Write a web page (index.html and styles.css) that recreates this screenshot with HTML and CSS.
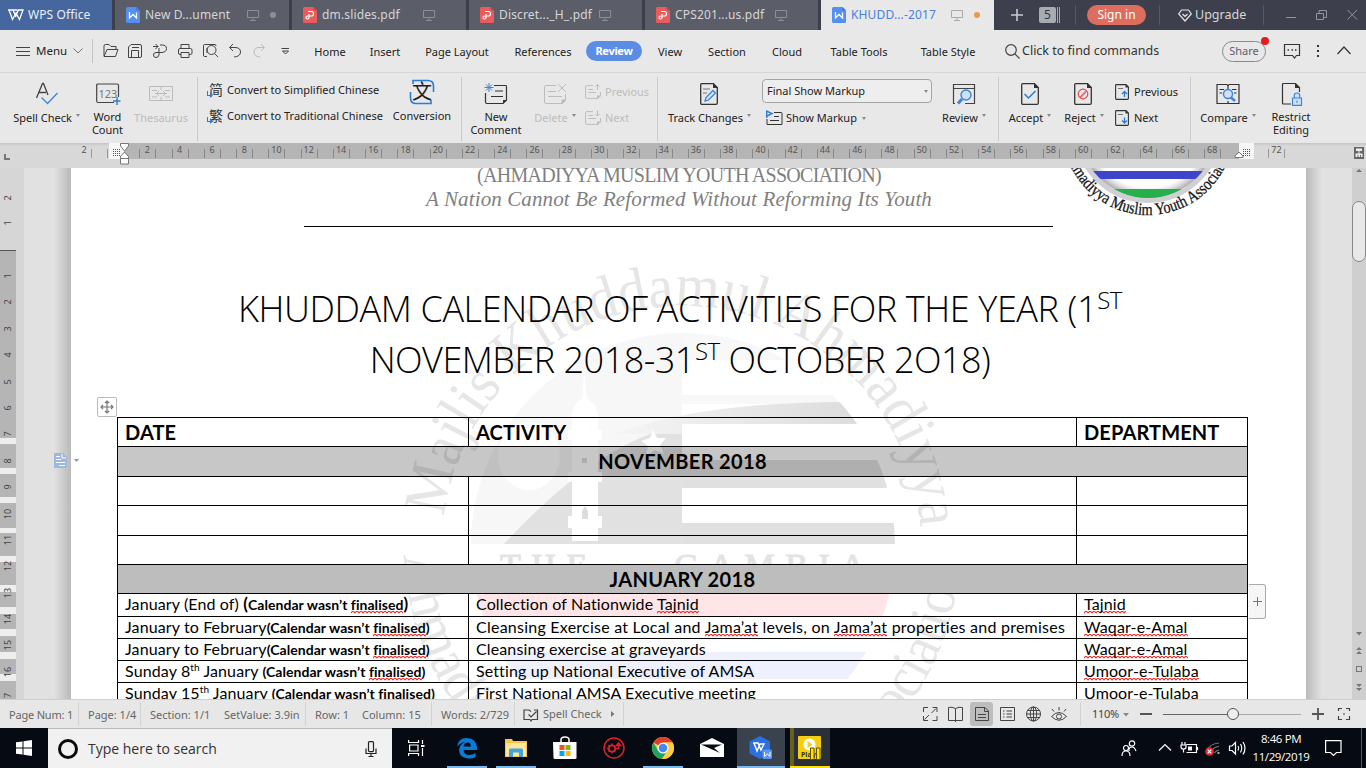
FILE: index.html
```html
<!DOCTYPE html>
<html lang="en">
<head>
<meta charset="utf-8">
<title>KHUDDAM Calendar - WPS Office</title>
<link rel="stylesheet" href="styles.css">
</head>
<body>
<svg class="defs" width="0" height="0">
  <symbol id="doc" viewBox="0 0 14 16"><path d="M1.500 0H10.500L14 3.500V14.500Q14 16 12.500 16H1.500Q0 16 0 14.500V1.500Q0 0 1.500 0Z" fill="#5490f2"/><path d="M10.500 0L14 3.500H10.500Z" fill="#3f74d6"/><path d="M3.500 5V11L7 7.500L10.500 11V5.500" fill="none" stroke="#fff" stroke-width="1.300"/></symbol>
  <symbol id="pdf" viewBox="0 0 14 16"><path d="M1.500 0H10.500L14 3.500V14.500Q14 16 12.500 16H1.500Q0 16 0 14.500V1.500Q0 0 1.500 0Z" fill="#e95c5c"/><path d="M10.500 0L14 3.500H10.500Z" fill="#c74949"/><path d="M5 4.500H8.500Q10.500 4.500 10.500 6.700T8.500 9H4.800Q3 9 3 10.500T4.500 12Q6 12 6 10.500V7" fill="none" stroke="#fff" stroke-width="1.200"/></symbol>
  <symbol id="screen" viewBox="0 0 12 12"><path d="M.500 1.500H11.500V8.500H.500ZM6 8.500V11M3 11.500H9" fill="none" stroke="currentColor"/></symbol>
  <symbol id="page" viewBox="0 0 18 22"><path d="M1.500 .700H13.500L17.300 4.500V20Q17.300 21.300 16 21.300H2Q.700 21.300 .700 20V1.700Q.700 .700 1.500 .700Z" fill="none" stroke="#333" stroke-width="1.300"/><path d="M13 0L18 5H13Z" fill="#333"/></symbol>
  <symbol id="spage" viewBox="0 0 14 16"><path d="M1.500 .600H11L13.400 3V14.500Q13.400 15.400 12.500 15.400H1.500Q.600 15.400 .600 14.500V1.500Q.600 .600 1.500 .600Z" fill="none" stroke="#333" stroke-width="1.100"/><path d="M10.500 0L14 3.500H10.500Z" fill="#333"/></symbol>
  <symbol id="note" viewBox="0 0 16 14"><path d="M8 .600H1.500Q.600 .600 .600 1.500V12.500Q.600 13.400 1.500 13.400H13L15.400 11V7M3.500 4.500H8M3.500 7.500H11" fill="none" stroke="currentColor"/><path d="M12 14V10.500H16Z" fill="currentColor"/></symbol>
</svg>

<header class="tabs">
  <div class="brand"><svg width="16" height="12" viewBox="0 0 16 12"><path d="M0 1H5M1 1L4.500 10.500L8 4L11.500 10.500L15 1H10.500L7.500 7M5 1L8 8M5 1H9.500" fill="none" stroke="#fff" stroke-width="1.300"/></svg><span>WPS Office</span></div>
  <div class="tab"><svg class="file"><use href="#doc"/></svg><span>New D...ument</span><svg class="scr s1"><use href="#screen"/></svg><i class="dot"></i></div>
  <div class="tab"><svg class="file"><use href="#pdf"/></svg><span>dm.slides.pdf</span><svg class="scr s2"><use href="#screen"/></svg></div>
  <div class="tab"><svg class="file"><use href="#pdf"/></svg><span>Discret..._H_.pdf</span><svg class="scr s3"><use href="#screen"/></svg></div>
  <div class="tab"><svg class="file"><use href="#pdf"/></svg><span>CPS201...us.pdf</span><svg class="scr s4"><use href="#screen"/></svg></div>
  <div class="tab active"><svg class="file"><use href="#doc"/></svg><span>KHUDD...-2017</span><svg class="scr s5"><use href="#screen"/></svg><i class="dot"></i></div>
  <div class="plus"><svg width="12" height="12" viewBox="0 0 12 12"><path d="M6 0V12M0 6H12" stroke="#c9cad0" stroke-width="1.600"/></svg></div>
  <div class="count"><b>5</b><i></i><i></i></div>
  <div class="sign"><span>Sign in</span></div>
  <div class="upg"><svg width="14" height="13" viewBox="0 0 14 13"><path d="M3.500 1H10.500L13.300 5L7 12L.700 5ZM4.500 5L7 7.500L9.500 5" fill="none" stroke="#e4e4e8" stroke-width="1.200"/></svg><span>Upgrade</span></div>
  <div class="win"><svg width="76" height="12" viewBox="0 0 76 12"><path d="M0 8.500H10M30.500 4.500H37.500V10.500H30.500ZM33 4V1.500H40.500V8.500H38M61.500 1L71 10.500M71 1L61.500 10.500" fill="none" stroke="#92949d"/></svg></div>
</header>

<nav class="menu">
  <div class="m-burger"><svg width="14" height="11" viewBox="0 0 14 11"><path d="M0 1.500H14M0 5.500H14M0 9.500H14" stroke="#444"/></svg><span>Menu</span><svg width="10" height="6" viewBox="0 0 10 6"><path d="M.500 .500L5 5L9.500 .500" fill="none" stroke="#777"/></svg></div>
  <div class="quick"><svg width="190" height="16" viewBox="0 0 190 16" fill="none" stroke="#444">
    <path d="M1 13V3Q1 1.500 2.500 1.500H6L8 3.500H13V6M1 13.500L4 6.500H15L12.500 13.500Z"/>
    <path d="M25.500 14.500V4L28 1.500H37Q38.500 1.500 38.500 3V13Q38.500 14.500 37 14.500H25.500M28.500 14V7.500H35.500V14M29 4.500H36"/>
    <path d="M50 3.500H55M52.500 1L55 3.500L52.500 6M57 2H59Q63.500 2 63.500 5.500T59 9.500H53Q50.500 9.500 50.500 12T53 14.500T56 12V5"/>
    <path d="M78 5V1.500H86V5M78 11.500H77Q75.500 11.500 75.500 10V7Q75.500 5.500 77 5.500H87.500Q89 5.500 89 7V10Q89 11.500 87.500 11.500H86M78 9.500H86V14.500H78Z"/>
    <path d="M104 13.500H101.500Q100.500 13.500 100.500 12V2.500Q100.500 1.500 101.500 1.500H112Q113 1.500 113 3M111.500 10.500L115 14M104 5V10"/><circle cx="108.500" cy="7" r="4.500"/>
    <path d="M130 1L126.500 4.500L130 8M127 4.500H132Q137.500 4.500 137.500 9T131 14"/>
    <path stroke="#bbb" d="M158 1L161.500 4.500L158 8M161 4.500H156Q151 4.500 151 9T157 14"/>
    <path d="M178.500 5.500H186M179.500 8L182.500 11L185.500 8Z"/></svg></div>
  <span>Home</span><span>Insert</span><span>Page Layout</span><span>References</span><span class="on">Review</span><span>View</span><span>Section</span><span>Cloud</span><span>Table Tools</span><span>Table Style</span>
  <div class="find"><svg width="15" height="15" viewBox="0 0 15 15" fill="none" stroke="#444" stroke-width="1.200"><circle cx="6" cy="6" r="5.300"/><path d="M10 10L14.500 14.500"/></svg><span>Click to find commands</span></div>
  <div class="share">Share<i></i></div>
  <div class="mtools"><svg width="70" height="18" viewBox="0 0 70 18" fill="none" stroke="#333"><path d="M1.500 2.500H16.500V13.500H13.500L11.500 16L9.500 13.500H1.500Z" stroke-width="1.200"/><path d="M4.500 8H6M8.500 8H10M12 8H13.500" stroke-width="1.500"/><path d="M35 3V5M35 8V10M35 13V15" stroke-width="2"/><path d="M54.500 12L61 5L67.500 12" stroke-width="1.200"/></svg></div>
</nav>

<section class="ribbon">
  <div class="grp g1">
    <div class="tool"><svg width="24" height="24" viewBox="0 0 24 24" fill="none"><path d="M1.500 16L7.500 1.500H8.500L13 13M4 10.500H11" stroke="#444" stroke-width="1.300"/><path d="M6.500 15.500L12.500 21.500L22.500 11" stroke="#3c86d8" stroke-width="1.300"/></svg><span class="dd low">Spell Check</span></div>
    <div class="tool"><svg width="24" height="24" viewBox="0 0 24 24" fill="none"><path d="M18 20.500H2Q.700 20.500 .700 19V3Q.700 2 2 2H21Q22.500 2 22.500 3V15" stroke="#444" stroke-width="1.200"/><path d="M21 15V23M17 19H24.500" stroke="#2b7cd3" stroke-width="1.400"/><text x="2.500" y="15.500" class="n123">123</text></svg><span>Word<br>Count</span></div>
    <div class="tool off"><svg width="24" height="24" viewBox="0 0 24 24" fill="none" stroke="#bcbcbc"><path d="M.500 4.500H23.500V18.500H.500ZM12 4.500V8M12 15V18.500M3 8.500H8M16 8.500H21M3 15H8M16 15H21M6 11.500H18M10 9L7.500 11.500L10 14M14 9L16.500 11.500L14 14"/></svg><span class="low">Thesaurus</span></div>
  </div>
  <div class="grp g2">
    <div class="rows"><div><i class="cjk" lang="zh">简</i>Convert to Simplified Chinese</div><div><i class="cjk" lang="zh">繁</i>Convert to Traditional Chinese</div></div>
    <div class="tool"><div class="conv"><svg width="26" height="26" viewBox="0 0 26 26" fill="none" stroke="#2b7cd3" stroke-width="1.600"><path d="M4 5V1.500H19Q24.500 1.500 24.500 7V13M1.500 13V19Q1.500 24.500 7 24.500H22V21M1.500 13V17"/></svg><b lang="zh">文</b></div><span>Conversion</span></div>
  </div>
  <div class="grp g3">
    <div class="tool"><svg width="24" height="24" viewBox="0 0 24 24" fill="none"><path d="M10 3.500H22Q22.500 3.500 22.500 5V18L19 21.500H3Q1.500 21.500 1.500 20V11M11 9H19M7 14.500H19" stroke="#333" stroke-width="1.200"/><path d="M19 22V18H23Z" fill="#333"/><path d="M5 1V10M.500 5.500H9.500M2 2.500L8 8.500M8 2.500L2 8.500" stroke="#3c86d8"/></svg><span>New<br>Comment</span></div>
    <div class="tool off"><svg width="24" height="24" viewBox="0 0 24 24" fill="none" stroke="#bcbcbc"><path d="M13 3.500H2.500Q1.500 3.500 1.500 5V20Q1.500 21.500 3 21.500H19L22.500 18V12M5 9.500H13M5 14.500H19M15 2L23 10M23 2L15 10"/><path d="M19 22V18H23Z" fill="#bcbcbc"/></svg><span class="dd low">Delete</span></div>
    <div class="rows off"><div><svg width="16" height="16" viewBox="0 -1 16 16"><use href="#note" width="16" height="14"/><path d="M12.500 5V-.500M10.500 1.500L12.500 -.500L14.500 1.500" fill="none" stroke="#bcbcbc"/></svg>Previous</div><div><svg width="16" height="16" viewBox="0 -1 16 16"><use href="#note" width="16" height="14"/><path d="M12.500 -.500V5M10.500 3L12.500 5L14.500 3" fill="none" stroke="#bcbcbc"/></svg>Next</div></div>
  </div>
  <div class="grp g4">
    <div class="tool"><svg width="20" height="24" viewBox="0 0 20 24"><use href="#page" x="0" y="1" width="18" height="22"/><path d="M3 7H10M3 11H7" stroke="#777"/><path d="M5 19L6 15.500L13 8.500L15.500 11L8.500 18Z" fill="#cfe0f5" stroke="#3c86d8" stroke-width="1.300"/></svg><span class="dd low">Track Changes</span></div>
    <div class="combo"><div class="box">Final Show Markup</div><div class="show"><svg width="17" height="16" viewBox="0 0 17 16" fill="none"><path d="M8 2.500H15.500Q16 2.500 16 3.500V14.500H1V9M8 6.500H13M4 10.500H13" stroke="#333"/><path d="M.700 8V1L6 3.500L1 6" stroke="#2b7cd3" stroke-width="1.400"/></svg><span class="dd">Show Markup</span></div></div>
    <div class="tool"><svg width="24" height="24" viewBox="0 0 24 24" fill="none"><path d="M3 21.500H1.500V2.500H22.500V21.500H13M1.500 6.500H22.500" stroke="#444" stroke-width="1.200"/><circle cx="14" cy="13" r="5" fill="#cfe0f5" stroke="#3c86d8" stroke-width="1.400"/><path d="M10 17L6 21.500" stroke="#3c86d8" stroke-width="3"/></svg><span class="dd low">Review</span></div>
  </div>
  <div class="grp g5">
    <div class="tool"><svg width="20" height="24" viewBox="0 0 20 24"><use href="#page" x="1" y="1" width="18" height="22"/><path d="M4.500 12L8.500 16L15.500 9" fill="none" stroke="#2b7cd3" stroke-width="1.500"/></svg><span class="dd low">Accept</span></div>
    <div class="tool"><svg width="20" height="24" viewBox="0 0 20 24"><use href="#page" x="0" y="1" width="18" height="22"/><circle cx="9" cy="12" r="4.800" fill="none" stroke="#e05252" stroke-width="1.200"/><path d="M6 15L12 8.500M6.500 16L12.500 9.500" stroke="#e05252"/></svg><span class="dd low">Reject</span></div>
    <div class="rows"><div><svg width="15" height="16" viewBox="0 0 15 16"><use href="#spage" width="14" height="16"/><path d="M3 4.500H8" stroke="#777"/><path d="M9.500 13V7.500M7 10L9.500 7.500L12 10" fill="none" stroke="#2b7cd3" stroke-width="1.300"/></svg>Previous</div><div><svg width="15" height="16" viewBox="0 0 15 16"><use href="#spage" width="14" height="16"/><path d="M3 4.500H8" stroke="#777"/><path d="M9.500 7.500V13M7 10.500L9.500 13L12 10.500" fill="none" stroke="#2b7cd3" stroke-width="1.300"/></svg>Next</div></div>
  </div>
  <div class="grp g6">
    <div class="tool"><svg width="24" height="24" viewBox="0 0 24 24" fill="none"><path d="M11 2.500H1V21.500H23V2.500H13L12 4L11 2.500M12 4V7M12 19V21.500M3.500 7.500H8M16 7.500H20.500M3.500 11H6M18 11H20.500" stroke="#333" stroke-width="1.200"/><circle cx="12" cy="12" r="4.500" fill="#cfe0f5" stroke="#3c86d8" stroke-width="1.400"/><path d="M15 15.500L19 19" stroke="#3c86d8" stroke-width="2.500"/></svg><span class="dd low">Compare</span></div>
    <div class="tool"><svg width="20" height="24" viewBox="0 0 20 24" fill="none"><path d="M10 22H2.500Q1.500 22 1.500 21V2.500Q1.500 1.500 2.500 1.500H14.500L18.500 5.500V10" stroke="#333" stroke-width="1.200"/><path d="M14 1L19 6H14Z" fill="#333"/><path d="M11.500 16H20.500V23.300H11.500ZM13.300 16V13.500Q13.300 11 16 11T18.700 13.500V16" fill="#cfe0f5" stroke="#3c86d8" stroke-width="1.200"/><path d="M16 18.500V21" stroke="#3c86d8"/></svg><span>Restrict<br>Editing</span></div>
  </div>
</section>

<div class="ruler">
  <b class="corner"></b>
  <div class="rl"><span class="n0">2</span><i class="grid"></i></div>
  <div class="scale"><span>2</span><span>4</span><span>6</span><span>8</span><span>10</span><span>12</span><span>14</span><span>16</span><span>18</span><span>20</span><span>22</span><span>24</span><span>26</span><span>28</span><span>30</span><span>32</span><span>34</span><span>36</span><span>38</span><span>40</span><span>42</span><span>44</span><span>46</span><span>48</span><span>50</span><span>52</span><span>54</span><span>56</span><span>58</span><span>60</span><span>62</span><span>64</span><span>66</span><span>68</span></div>
  <div class="rr"><i class="grid"></i><span class="n72">72</span></div>
  <svg class="tabicon" width="10" height="12" viewBox="0 0 10 12"><path d="M0 0H10V12H0Z" fill="#666"/><path d="M2 1.500H8V4H2ZM4.500 4H5.500V6.500H4.500ZM1.500 6.500H8.500V10H7V8H6V10H4.500V8H3.500V10H1.500Z" fill="#eee"/></svg>
  <svg class="indent" width="10" height="23" viewBox="0 0 10 23" fill="#fff" stroke="#777"><path d="M.500 .500H8.500V3L4.500 8L.500 3ZM4.500 9L8.500 13.500V15.500H.500V13.500ZM.500 15.500H8.500V21H.500Z"/></svg>
  <svg class="indent right" width="10" height="8" viewBox="0 0 10 8" fill="#fff" stroke="#777"><path d="M5 1L9 5V6.500H1V5Z"/></svg>
</div>

<main class="work">
  <div class="vruler"><span class="v2">2</span><span class="v1">1</span><div class="vs"><span>1</span><span>2</span><span>3</span><span>4</span><span>5</span><span>6</span><span>7</span><span>8</span><span>9</span><span>10</span><span>11</span><span>12</span><span>13</span><span>14</span><span>15</span><span>16</span><span>17</span></div></div>
  <div class="canvas">
    <article class="paper">
      <svg class="mark" width="600" height="531" viewBox="380 168 600 531">
        <defs><path id="up" d="M443 545A239 239 0 0 1 921 545"/><path id="down" d="M404 545A278 278 0 0 0 960 545"/><clipPath id="disc"><circle cx="683" cy="545" r="212"/></clipPath>
        <linearGradient id="fade" x1="0" x2="1"><stop offset="0" stop-color="#f5f5f5"/><stop offset="1" stop-color="#dcdcdc"/></linearGradient></defs>
        <g clip-path="url(#disc)">
          <path d="M470 330H682V544H470Z" fill="#f7f7f7"/><path d="M682 330H895V360H682Z" fill="#f8f8f8"/>
          <path d="M682 395H838V404H682Z" fill="#f8f8f8"/>
          <ellipse cx="529" cy="456" rx="31" ry="34" fill="#fff"/>
          <path d="M504 544Q600 440 682 425V544Z" fill="#e1e1e1"/>
          <path d="M615 434Q700 402 846 402L858 424H682V434Z" fill="url(#fade)"/>
          <path d="M682 460H895V488H682ZM682 523H895V544H682Z" fill="#e0e0e0"/>
          <path d="M470 594H895V616H470Z" fill="#ffe5e7"/><path d="M470 652H895V679H470Z" fill="#eef0fe"/>
        </g>
        <g fill="#fff"><path d="M584 372L587 398Q598 405 598 417V430H602V440H598V472H602V482H598V516H602V528H598V541H572V528H568V516H572V482H568V472H572V440H568V430H572V417Q572 404 582 398Z"/><path d="M626 432A25 25 0 1 0 668 462A22 22 0 0 1 626 432Z"/><path d="M653 430L657 438L666 438L660 445L664 454L655 450L646 456L648 446L641 441L650 438Z"/></g>
        <path d="M582 511L585 506L588 511V519H582ZM582 458H587V463H582Z" fill="#ddd"/>
        <g class="ring"><text font-size="61" textLength="705" lengthAdjust="spacingAndGlyphs"><textPath href="#up" startOffset="28">Majlis Khuddamul Ahmadiyya</textPath></text>
        <text font-size="58" textLength="845" lengthAdjust="spacingAndGlyphs"><textPath href="#down" startOffset="10">Ahmadiyya Muslim Youth Association</textPath></text></g>
        <text class="gambia" x="500" y="577" textLength="365">THE&#160;&#160;&#160; GAMBIA</text>
      </svg>
      <svg class="logo" width="170" height="52" viewBox="1063 168 170 52">
        <defs><path id="lp" d="M1062 129A86 86 0 0 0 1234 129"/><clipPath id="lc"><circle cx="1148" cy="129" r="69"/></clipPath><radialGradient id="lg" gradientUnits="userSpaceOnUse" cx="1148" cy="129" r="69"><stop offset=".850" stop-color="#888" stop-opacity="0"/><stop offset="1" stop-color="#555" stop-opacity=".500"/></radialGradient></defs>
        <circle cx="1148" cy="129" r="71.500" fill="#fff" stroke="#cfcfd4" stroke-width="5"/>
        <circle cx="1148" cy="129" r="69" fill="url(#lg)"/>
        <g clip-path="url(#lc)"><path d="M1070 171H1230V179H1070Z" fill="#3f45cb"/><path d="M1070 189H1230V200H1070Z" fill="#25b04b"/></g>
        <text class="lt" textLength="222" lengthAdjust="spacingAndGlyphs"><textPath href="#lp" startOffset="25">Ahmadiyya Muslim Youth Association</textPath></text>
      </svg>
      <div class="lh"><p class="org">(AHMADIYYA MUSLIM YOUTH ASSOCIATION)</p><p class="motto">A Nation Cannot Be Reformed Without Reforming Its Youth</p><hr></div>
      <h1><span class="t1">KHUDDAM CALENDAR OF ACTIVITIES FOR THE YEAR (1<sup>ST</sup></span><span class="t2">NOVEMBER 2018-31<sup>ST</sup> OCTOBER 2O18)</span></h1>
      <div class="table">
        <div class="h">DATE</div><div class="h">ACTIVITY</div><div class="h">DEPARTMENT</div>
        <div class="h full nov">NOVEMBER 2018</div>
        <div></div><div></div><div></div><div></div><div></div><div></div><div></div><div></div><div></div>
        <div class="h full jan">JANUARY 2018</div>
        <div>January (End of) <b class="big">(</b><b>Calendar wasn’t <u>finalised</u></b><b class="big">)</b></div><div>Collection of Nationwide <u>Tajnid</u></div><div><u>Tajnid</u></div>
        <div>January to February<b>(Calendar wasn’t <u>finalised</u>)</b></div><div class="long">Cleansing Exercise at Local and <u>Jama’at</u> levels, on <u>Jama’at</u> properties and premises</div><div><u>Waqar-e-Amal</u></div>
        <div>January to February<b>(Calendar wasn’t <u>finalised</u>)</b></div><div>Cleansing exercise at graveyards</div><div><u>Waqar-e-Amal</u></div>
        <div>Sunday 8<sup>th</sup> January <b>(Calendar wasn’t <u>finalised</u>)</b></div><div>Setting up National Executive of AMSA</div><div><u>Umoor-e-Tulaba</u></div>
        <div>Sunday 15<sup>th</sup> January <b>(Calendar wasn’t <u>finalised</u>)</b></div><div>First National AMSA Executive meeting</div><div><u>Umoor-e-Tulaba</u></div>
      </div>
      <div class="move"><svg width="14" height="14" viewBox="0 0 14 14" fill="none" stroke="#777" stroke-width="1.200"><path d="M7 1V13M1 7H13M5 3L7 1L9 3M5 11L7 13L9 11M3 5L1 7L3 9M11 5L13 7L11 9"/></svg></div>
      <div class="addcol"><svg width="9" height="9" viewBox="0 0 9 9"><path d="M4.500 0V9M0 4.500H9" stroke="#777"/></svg></div>
    </article>
    <svg class="sect" width="26" height="16" viewBox="0 0 26 16"><path d="M0 0H9L13 4V15H0Z" fill="#9db7dd"/><path d="M2 3.500H6M2 6.500H7M2 9.500H11M5 12.500H11M8 1V5H12" stroke="#fff" fill="none"/><path d="M20 6H25L22.500 9Z" fill="#999"/></svg>
  </div>
  <aside class="scroll"><svg width="14" height="531" viewBox="0 0 14 531"><path d="M4 4L7 1L10 4Z" fill="#777"/><rect x=".500" y="33.500" width="13" height="60" rx="6.500" fill="#e8e8e8" stroke="#888"/><path d="M4 464H10L7 467.500ZM4 482L7 479L10 482ZM4 486L7 483L10 486ZM4 516H10L7 519ZM4 520H10L7 523Z" fill="#777"/><rect x="4.500" y="498.500" width="5" height="5" fill="none" stroke="#777"/></svg></aside>
</main>

<footer class="status">
  <span>Page Num: 1</span><span class="bl">Page: 1/4</span><span class="bl">Section: 1/1</span><span>SetValue: 3.9in</span><span class="bl">Row: 1</span><span>Column: 15</span><span class="bl">Words: 2/729</span>
  <span class="bl sp"><svg width="16" height="13" viewBox="0 0 16 13" fill="none" stroke="#444" stroke-width="1.200"><path d="M11 1H14.500V10.500H9L8 12L7 10.500H1V1H6L8 2.500M5.500 5.500L8 8L13.500 2.500"/></svg>Spell Check<svg class="ar" width="4" height="6" viewBox="0 0 4 6"><path d="M0 0L3.500 3L0 6Z" fill="#777"/></svg></span>
  <div class="views"><svg width="150" height="24" viewBox="920 0 150 24" fill="none" stroke="#444"><rect x="970" y="0" width="23" height="24" rx="3" fill="#bdbdbd" stroke="none"/><path d="M923.500 10V5.500H928M932.500 5.500H937V10M937 14V18.500H932.500M928 18.500H923.500V14M936 6.500L931.500 11M924.500 17.500L929 13"/><path d="M955.500 6.500Q952 4.500 948.500 5.500V18.500H962.500V5.500Q959 4.500 955.500 6.500V20"/><path d="M975.500 5.500H985L988.500 9V18.500H975.500ZM984.500 5.500V9.500H988.500M978 12.500H986M978 15.500H986"/><path d="M1000.500 5.500H1014.500V18.500H1000.500ZM1003 9H1004.500M1006.500 9H1012M1003 12H1004.500M1006.500 12H1012M1003 15H1004.500M1006.500 15H1012"/><circle cx="1033.500" cy="12" r="7"/><ellipse cx="1033.500" cy="12" rx="3.200" ry="7"/><path d="M1033.500 5V19M1026.500 12H1040.500M1027.500 8.500H1039.500M1027.500 15.500H1039.500"/><path d="M1051.500 14.500Q1059 6.500 1066.500 14.500Q1059 22 1051.500 14.500M1059 8.500V5M1054 9.500L1052 7M1064 9.500L1066 7"/><circle cx="1059" cy="14.500" r="2.500"/></svg></div>
  <div class="zoom">110%</div>
  <svg class="slider" width="234" height="16" viewBox="1120 0 234 16"><path d="M1123 7H1129L1126 10.500Z" fill="#888"/><path d="M1140 8H1152M1312 8H1324M1318 2V14" stroke="#555" stroke-width="1.800"/><path d="M1163 8.500H1233" stroke="#666"/><path d="M1238 8.500H1301" stroke="#aaa"/><circle cx="1233" cy="8" r="5.500" fill="#efefef" stroke="#555"/><path d="M1338.500 5V2.500H1342M1346 2.500H1349.500V5M1349.500 10V13.500H1346M1342 13.500H1338.500V10M1343 8H1345" fill="none" stroke="#444" stroke-width="1.200"/></svg>
</footer>

<footer class="task">
  <div class="start"><svg width="16" height="16" viewBox="0 0 16 16" fill="#fff"><path d="M0 2.300L6.500 1.400V7.500H0ZM7.500 1.200L16 0V7.500H7.500ZM0 8.500H6.500V14.600L0 13.700ZM7.500 8.500H16V16L7.500 14.800Z"/></svg></div>
  <div class="search"><i></i><span>Type here to search</span><svg width="12" height="16" viewBox="0 0 12 16" fill="none" stroke="#222" stroke-width="1.200"><rect x="3.500" y=".600" width="5" height="10" rx="1"/><path d="M1 7.500V12.500H11V7.500M6 12.500V15.500M3.500 15.500H8.500"/></svg></div>
  <div class="tv"><svg width="17" height="16" viewBox="0 0 17 16" fill="none" stroke="#fff" stroke-width="1.200"><path d="M.600 0V2.500H10.500V0M.600 16V13.500H10.500V16M1.600 5H10V11H1.600ZM14.500 0V4M14.500 8V16"/><path d="M13 6H16.500" stroke-width="2"/></svg></div>
  <div class="run"><svg width="20" height="22" viewBox="0 0 20 22"><path d="M0 10Q1 1 10 1Q19 1 20 11V13H6.500Q7 18 12 18Q16 18 18.500 16V20Q15 22 11 21.500Q2 20.500 2 13Q2.500 7.500 8 5Q3 5.500 0 10ZM6.500 9.500H14Q13.500 5 10.500 5.500Q7 6 6.500 9.500Z" fill="#0a7bd8" fill-rule="evenodd"/></svg></div>
  <div class="run two"><svg width="22" height="20" viewBox="0 0 22 20"><path d="M0 1H7L8 3H22V19H0Z" fill="#f7c64e"/><path d="M1 5H21V18H1Z" fill="#fde59a"/><path d="M4 19V12Q4 10.500 5.500 10.500H16.500Q18 10.500 18 12V19H14V14.500H8V19Z" fill="#3ea6de"/></svg></div>
  <div><svg width="24" height="24" viewBox="0 0 24 24"><path d="M8 7V4Q8 1 12 1T16 4V7" fill="none" stroke="#fff" stroke-width="1.500"/><path d="M0 6H23.500V22Q23.500 23 22 23H2Q.500 23 .500 22Z" fill="#fff"/><path d="M6.500 9H11.500V14H6.500Z" fill="#f25022"/><path d="M12.500 9H17.500V14H12.500Z" fill="#7fba00"/><path d="M6.500 15H11.500V20H6.500Z" fill="#00a4ef"/><path d="M12.500 15H17.500V20H12.500Z" fill="#ffb900"/></svg></div>
  <div><svg width="22" height="22" viewBox="0 0 22 22" fill="none" stroke="#d92228"><circle cx="11" cy="11" r="10" stroke-width="1.500"/><circle cx="9" cy="11.500" r="3.200" stroke-width="1.800"/><path d="M9 6.500V8M9 15V16.500M4 11.500H5.500M5.500 8L6.500 9M5.500 15L6.500 14M12.500 14.500L11.500 14M12 11.500H15.500V9M13.500 8.500L15.500 6L17.500 8.500Z" stroke-width="1.500"/></svg></div>
  <div class="run"><svg width="22" height="22" viewBox="0 0 22 22"><circle cx="11" cy="11" r="11" fill="#ffcd40"/><path d="M11 11L1.500 5.500A11 11 0 0 1 20.500 5.500H11Z" fill="#e33b2e"/><path d="M1.500 5.500A11 11 0 0 0 10 22L15.500 13.500L6 13.500Z" fill="#1da462"/><path d="M11 5.500H20.500A11 11 0 0 1 10 22L15.500 13.500Z" fill="#ffcd40"/><circle cx="11" cy="11" r="5.500" fill="#fff"/><circle cx="11" cy="11" r="4.300" fill="#4587f3"/></svg></div>
  <div><svg width="24" height="20" viewBox="0 0 24 20"><path d="M0 6L12 0L24 6V19H0Z" fill="#fff"/><path d="M1 6.500H22L14 10L20 15Z" fill="#060b13"/></svg></div>
  <div class="run hot"><svg width="24" height="24" viewBox="0 0 24 24"><path d="M11 0L21 5.500V17.500L11 23L.500 17.500V5.500Z" fill="#2b6fe0"/><path d="M4 7H9L12 14L15 8H11L8 15L5 7" fill="none" stroke="#fff" stroke-width="1.400"/><rect x="13.500" y="13.500" width="9.500" height="9.500" rx="1.500" fill="#5a96f8"/><path d="M15.500 16V20.500L18.300 18L21 20.500V16" fill="none" stroke="#fff"/></svg></div>
  <div class="py"><svg width="24" height="24" viewBox="0 0 24 24"><rect width="23" height="23" rx="1" fill="#f4cf10"/><circle cx="11.500" cy="8.500" r="6" fill="#fff"/><path d="M9.500 5L14.500 8.500L9.500 12Z" fill="#f4cf10"/><text x="3" y="21" class="pl">Play</text><path d="M12.500 12H16V23.500H12.500ZM18.500 12H22V23.500H18.500Z" fill="#ffe600" stroke="#5d5200"/></svg></div>
  <div class="tray"><svg width="132" height="18" viewBox="1118 0 132 18" fill="none" stroke="#fff" stroke-width="1.200"><circle cx="1132" cy="4.500" r="2.700"/><path d="M1129 12V10Q1129.500 8 1132 8T1136 12"/><circle cx="1126" cy="9" r="2.500"/><path d="M1122 17Q1122 12 1126 12T1130 17"/><path d="M1159 11.500L1165 5.500L1171 11.500M1186.500 5.500H1196.500V13.500H1186.500M1197.500 8V11M1182 3V6M1185 3V6M1181 6H1186V8Q1186 10 1183.500 10T1181 8ZM1183.500 10V13.500"/><path d="M1188 7.500H1192V11.500H1188Z" fill="#fff" stroke="none"/><path d="M1207 12Q1209 5 1219 4M1211 13Q1213 8 1219 7.500M1214.500 14Q1216 11.500 1219 11" stroke="#777"/><path d="M1217.500 14H1219.500" stroke="#aaa" stroke-width="2"/><circle cx="1209.500" cy="12.500" r="4.300" fill="#e02b2b" stroke="none"/><path d="M1207.700 10.700L1211.300 14.300M1211.300 10.700L1207.700 14.300"/><path d="M1229.500 7V11.500H1232L1235.500 15V3.500L1232 7ZM1238 7Q1239.500 9 1238 11.500M1240.500 5Q1243 9 1240.500 13.500M1243 3Q1247 9 1243 15.500"/></svg></div>
  <div class="clock">8:46 PM<br>11/29/2019</div>
  <div class="notif"><svg width="17" height="17" viewBox="0 0 17 17" fill="none" stroke="#fff" stroke-width="1.200"><path d="M.600 .600H16V12.500H11.500L8.500 15.500L5.500 12.500H.600Z"/></svg></div>
  <div class="peek"></div>
</footer>
</body>
</html>
```

FILE: styles.css
```css
* { box-sizing: border-box; }
body { margin: 0; width: 1366px; height: 768px; overflow: hidden; background: #e8e8e8; font: 11px/14px "Noto Sans", "Open Sans", sans-serif; color: #222; display: flex; flex-direction: column; }
svg { display: block; flex: none; overflow: visible; }
.defs { position: absolute; }
p, h1 { margin: 0; font-weight: normal; }
span, .rows div { white-space: nowrap; }

/* window tabs */
.tabs { height: 30px; flex: none; background: #3d404c; display: grid; grid-template-columns: 112px 177px 177px 176px 176px 176px 45px 36px 84px 104px 103px; font-size: 12px; color: #d5d6da; }
.tabs > div { display: flex; align-items: center; }
.tabs > .brand { background: #46679e; padding-left: 8px; gap: 4px; color: #e9eef7; letter-spacing: .100px; }
.tabs > .tab { background: #5b5d68; margin-left: 3px; padding-left: 11px; letter-spacing: .150px; }
.tabs > .tab.active { background: #e8e8e8; color: #4a80e0; }
.file { width: 14px; height: 16px; margin-right: 5px; }
.tab span { width: 94px; }
.scr { width: 12px; height: 12px; color: #8b8d97; margin-left: 8px; }
.s2 { margin-left: 7px; } .s3 { margin-left: 6px; } .s4 { margin-left: 6px; } .s5 { margin-left: 6px; color: #aaa; }
.dot { width: 6px; height: 6px; border-radius: 50%; background: #8d8f98; margin-left: 11px; }
.active .dot { background: #e89b4c; }
.tabs > .plus { padding-left: 17px; }
.count b { background: #a9abb3; color: #33353f; font-weight: normal; font-size: 12px; width: 17px; height: 16px; line-height: 16px; text-align: center; border-radius: 2px; }
.count i { width: 1px; height: 16px; background: #a9abb3; margin-left: 1px; }
.tabs > .sign, .tabs > .upg, .tabs > .win { background: linear-gradient(#565964, #565964) 0 50%/1px 20px no-repeat; }
.tabs > .sign { padding-left: 12px; }
.sign span { background: #dc6d5f; color: #fff; border-radius: 10px; width: 59px; height: 20px; line-height: 19px; text-align: center; }
.tabs > .upg { padding-left: 19px; gap: 3px; font-size: 12.500px; }
.tabs > .win { padding-left: 23px; }

/* menu */
.menu { height: 43px; flex: none; border-bottom: 1px solid #d6d6d6; display: grid; grid-template-columns: 93px 202px 70px 40px 104px 68px 74px 38px 76px 44px 100px 78px 235px 61px 83px; align-items: center; }
.menu > span { justify-self: center; padding-top: 1px; text-align: center; }
.m-burger { display: flex; align-items: center; padding-left: 16px; gap: 6px; font-size: 11.500px; height: 24px; border-right: 1px solid #c4c4c4; }
.m-burger span { width: 31px; }
.quick { padding-left: 10px; }
.menu .on { background: #5b8de4; color: #fff; font-weight: bold; height: 20px; line-height: 18px; border-radius: 10px; width: 56px; letter-spacing: -.300px; }
.find { display: flex; align-items: center; gap: 2px; padding-left: 18px; font-size: 12.500px; color: #333; }
.share { position: relative; width: 44px; height: 21px; border: 1px solid #8a8a94; border-radius: 11px; text-align: center; line-height: 18px; color: #5b6070; font-size: 11px; }
.share i { position: absolute; right: -4px; top: -5px; width: 8px; height: 8px; border-radius: 50%; background: #e31b1b; }

/* ribbon */
.ribbon { height: 70px; flex: none; display: flex; padding-top: 4px; }
.grp { display: grid; height: 64px; border-right: 1px solid #cacaca; }
.g1 { width: 198px; grid-template-columns: 77px 45px 62px; padding-left: 8px; }
.g2 { width: 264px; grid-template-columns: 181px 68px; padding-left: 9px; }
.g3 { width: 196px; grid-template-columns: 60px 58px 68px; padding-left: 4px; }
.g4 { width: 341px; grid-template-columns: 91px 7px 170px 6px 52px; padding-left: 6px; }
.g4 .combo { grid-column: 3; } .g4 .tool:last-child { grid-column: 5; }
.g5 { width: 192px; grid-template-columns: 54px 57px 70px; padding-left: 4px; }
.g5 .tool:nth-child(2) { padding-right: 3px; }
.g6 { width: 175px; grid-template-columns: 62px 6px 52px; padding-left: 6px; border: 0; }
.g6 .tool:last-child { grid-column: 3; }
.tool { display: flex; flex-direction: column; align-items: center; text-align: center; line-height: 13px; padding-top: 5px; }
.tool > span { margin-top: 4px; }
.tool > .low { margin-top: 5px; }
.dd::after { content: ""; display: inline-block; border: 2.500px solid transparent; border-top: 3px solid #888; border-bottom: 0; margin-left: 4px; vertical-align: 5px; }
.show .dd::after { vertical-align: 2px; margin-left: 5px; }
.off { color: #bcbcbc; }
.rows { display: flex; flex-direction: column; padding-top: 7px; gap: 10px; }
.g2 .rows { padding-top: 5px; }
.rows > div { display: flex; align-items: center; gap: 4px; height: 16px; }
.g3 .rows { padding-left: 1px; }
.g5 .rows { padding-left: 1px; }
.cjk { font: 14px/14px "Noto Sans CJK SC", sans-serif; width: 16px; height: 16px; padding-left: 2px; color: #333; position: relative; }
.cjk::before { content: ""; position: absolute; left: 0; top: 9px; width: 4px; height: 4px; border: solid #2b7cd3; border-width: 0 0 1px 1px; }
.cjk::after { content: ""; position: absolute; left: 3px; top: 10px; border: 3px solid transparent; border-left: 3px solid #2b7cd3; border-right: 0; }
.conv { width: 26px; height: 26px; margin-top: -3px; position: relative; }
.conv + span { margin-top: 4px; }
.conv b { position: absolute; left: 3px; top: 1px; font: 400 20px/22px "Noto Sans CJK SC", sans-serif; }
.n123 { font: 11px "Noto Sans", sans-serif; fill: #777; }
.combo { padding-top: 2px; }
.box { height: 24px; border: 1px solid #a5a5a5; border-radius: 4px; background: #eee; line-height: 22px; padding: 0 3px 0 4px; display: flex; justify-content: space-between; align-items: center; }
.box::after { content: ""; border: 2.500px solid transparent; border-top: 3px solid #888; border-bottom: 0; }
.show { display: flex; align-items: center; gap: 3px; padding: 7px 0 0 4px; }

/* horizontal ruler */
.ruler { height: 25px; flex: none; background: linear-gradient(#c4c4c4, #d8d8d8 3px); display: flex; position: relative; font-size: 9px; color: #555; line-height: 14px; }
.corner { width: 6px; height: 6px; border: solid #777; border-width: 0 0 2px 2px; margin: 11px 0 0 4px; }
.rl { width: 114px; display: flex; justify-content: flex-end; height: 16px; background: linear-gradient(#999, #999) 81px 6px/1px 9px no-repeat, linear-gradient(#999, #999) 97px 6px/1px 9px no-repeat; }
.rl .n0 { width: 16px; text-align: center; margin-right: 17px; }
.grid { width: 15px; height: 16px; background: #f6f6f6; padding: 6px 4px 3px; }
.grid::before { content: ""; display: block; width: 7px; height: 7px; background: repeating-linear-gradient(90deg, transparent 0 1px, #f6f6f6 1px 2px), repeating-linear-gradient(#555 0 1px, #f6f6f6 1px 2px); }
.scale { width: 1115px; height: 16px; background: #b5b5b5; display: flex; padding-left: 7.300px; }
.scale span { width: 32.280px; flex: none; text-align: center; background: linear-gradient(#888, #888) 8px 6px/1px 9px no-repeat, linear-gradient(#888, #888) 24px 6px/1px 9px no-repeat; }
.rr { width: 117px; height: 16px; display: flex; }
.n72 { width: 17px; margin-left: 14px; text-align: center; background: linear-gradient(#999, #999) 0 6px/1px 9px no-repeat, linear-gradient(#999, #999) 16px 6px/1px 9px no-repeat; }
.tabicon { margin-top: 4px; margin-left: -2px; }
.indent { position: absolute; left: 120px; top: 0; }
.indent.right { left: 1234px; top: 8px; }

/* work area */
.work { height: 531px; flex: none; display: flex; }
.vruler { width: 24px; background: #d6d6d6; font-size: 9px; color: #444; overflow: hidden; }
.vruler span { display: block; width: 16px; text-align: center; transform: rotate(-90deg); line-height: 16px; height: 16px; }
.vruler .v2 { margin-top: 22px; } .vruler .v1 { margin-top: 9px; }
.vs { width: 16px; margin-top: 19px; height: 449px; border-top: 1px solid #555; padding-top: 17px; background: linear-gradient(#eee, #eee) 0 187px/16px 6px no-repeat, linear-gradient(#eee, #eee) 0 217px/16px 6px no-repeat, linear-gradient(#eee, #eee) 0 246px/16px 6px no-repeat, linear-gradient(#eee, #eee) 0 277px/16px 5px no-repeat, linear-gradient(#eee, #eee) 0 305px/16px 6px no-repeat, linear-gradient(#eee, #eee) 0 334px/16px 7px no-repeat, linear-gradient(#eee, #eee) 0 356px/16px 7px no-repeat, linear-gradient(#eee, #eee) 0 378px/16px 7px no-repeat, linear-gradient(#eee, #eee) 0 401px/16px 7px no-repeat, linear-gradient(#eee, #eee) 0 423px/16px 7px no-repeat, #b5b5b5; }
.vs span { margin-bottom: 10.400px; }
.canvas { width: 1328px; position: relative; display: flex; padding-left: 47px; background: linear-gradient(90deg, #e1e1e1 30px, #b9b9b9 47px, #b9b9b9 1281px, #e1e1e1 1298px); overflow: hidden; }
.paper { width: 1235px; height: 531px; background: #fff; position: relative; overflow: hidden; isolation: isolate; flex: none; color: #000; }
.mark { position: absolute; left: 309px; top: 0; z-index: -1; }
.ring { font-family: "Liberation Serif", serif; fill: #e6e6e6; }
.gambia { font: 34px "Liberation Serif", serif; fill: #e3e3e3; stroke: #e3e3e3; }
.logo { position: absolute; left: 992px; top: 0; overflow: hidden; }
.lt { font: 17px "Liberation Serif", serif; fill: #111; stroke: #111; stroke-width: .250px; }
.lh { color: #7f7f7f; font-family: "Liberation Serif", serif; text-align: center; padding-right: 19px; height: 58px; width: 1235px; }
.org { font-size: 20px; line-height: 22px; margin-top: -4px; letter-spacing: -.720px; white-space: nowrap; }
.motto { font-size: 21px; line-height: 24px; font-style: italic; padding-top: 1px; white-space: nowrap; letter-spacing: .120px; }
.lh hr { border: 0; border-top: 1px solid #000; width: 749px; margin: 15px 0 0 233px; }
h1 { font: 300 36px/51px "Open Sans", Lato, sans-serif; height: 195px; padding-top: 61px; display: flex; flex-direction: column; align-items: center; padding-right: 17px; }
h1 sup { font-size: 24px; line-height: 0; vertical-align: 13px; }
.t1 { letter-spacing: -.390px; }
.t2 { letter-spacing: -.500px; }
.table { margin-left: 46px; width: 1131px; display: grid; grid-template-columns: 351px 608px 171px; grid-template-rows: 29px 30px 29px 30px 29px 29px 23px 22px 22px 22px 23px; border: 1px solid #000; border-width: 1px 0 0 1px; font: 16px/20px Lato, sans-serif; font-variant-ligatures: none; letter-spacing: .120px; }
.table > div { border: 1px solid #000; border-width: 0 1px 1px 0; padding-left: 7px; white-space: nowrap; overflow: hidden; }
.table > .h { font-weight: bold; font-size: 20px; line-height: 29px; }
.table > .full { grid-column: 1 / 4; text-align: center; padding: 0; letter-spacing: .350px; }
.table > .long { letter-spacing: .240px; }
.nov { background: rgba(0,0,0,.220); } .jan { background: #bdbdbd; }
.table b { font-size: 14px; letter-spacing: .050px; } .table b.big { font-size: 17px; }
.table sup { font-size: 10px; line-height: 0; vertical-align: 6px; }
.table u { text-decoration: none; padding-bottom: 1px; background: linear-gradient(45deg, transparent 55%, #e33 65% 80%, transparent 90%) 0 100%/4px 3px repeat-x, linear-gradient(135deg, transparent 10%, #e33 20% 35%, transparent 45%) 0 100%/4px 3px repeat-x; }
.move { position: absolute; left: 26px; top: 229px; width: 20px; height: 20px; border: 1px solid #bbb; border-radius: 2px; background: #fff; padding: 2px; }
.addcol { position: absolute; left: 1178px; top: 416px; width: 17px; height: 35px; border: 1px solid #aaa; border-left: 0; border-radius: 0 3px 3px 0; background: #f6f6f6; padding: 12px 4px; }
.sect { position: absolute; left: 30px; top: 285px; }
.scroll { width: 14px; background: #cfcfcf; }

/* status bar */
.status { height: 29px; flex: none; border-top: 1px solid #cfcfcf; background: #e7e7e7; display: grid; grid-template-columns: 78px 62px 74px 91px 47px 79px 83px 406px 161px 39px 234px; color: #666; align-items: center; }
.status > span { height: 24px; line-height: 26px; padding-left: 10px; }
.status > span:first-child { padding-left: 9px; letter-spacing: -.200px; }
.status > .bl { border-left: 1px solid #d2d2d2; padding-left: 9px; }
.status .sp { display: flex; align-items: center; gap: 4px; line-height: 22px; padding-left: 8px; width: 110px; border-right: 1px solid #d2d2d2; }
.sp svg:first-child { margin-top: 2px; } .sp .ar { margin-left: 5px; }
.status > .views { border-right: 1px solid #d2d2d2; height: 24px; }
.zoom { padding-left: 11px; color: #444; font-size: 11px; letter-spacing: -.300px; }

/* taskbar */
.task { height: 40px; flex: none; background: #060b13; display: grid; grid-template-columns: 48px 344px 50px 49px 49px 49px 49px 49px 49px 49px 49px 416px 62px 42px 12px; color: #fff; font-family: "Open Sans", sans-serif; }
.task > div { display: flex; align-items: center; justify-content: center; }
.task > .search { background: #f1f1f1; border-top: 1px solid #bbb; justify-content: flex-start; color: #333; font-size: 14px; padding-left: 10px; }
.search i { width: 20px; height: 20px; border: 3px solid #0a0a0a; border-radius: 50%; margin-right: 10px; }
.search span { width: 277px; }
.task > .tv { padding-right: 2px; }
.task > .run { background: linear-gradient(#76b9ed, #76b9ed) 50% 100%/40px 2px no-repeat; }
.task > .hot { background: linear-gradient(#76b9ed, #76b9ed) 1px 100%/48px 2px no-repeat, linear-gradient(#3a424d, #3a424d) 1px 0/48px 40px no-repeat; }
.task > .py { background: linear-gradient(#fce100, #fce100) 50% 100%/40px 2px no-repeat, linear-gradient(90deg, #66611f 4px, #2a2f38 4px) 50% 0/40px 40px no-repeat; }
.pl { font: bold 7px "Noto Sans", sans-serif; fill: #333; }
.task > .tray { justify-content: flex-end; }
.task > .clock { font-size: 11.500px; line-height: 18px; text-align: center; letter-spacing: -.400px; white-space: nowrap; }
.task > .peek { margin-left: 7px; border-left: 1px solid #555a62; }
```
